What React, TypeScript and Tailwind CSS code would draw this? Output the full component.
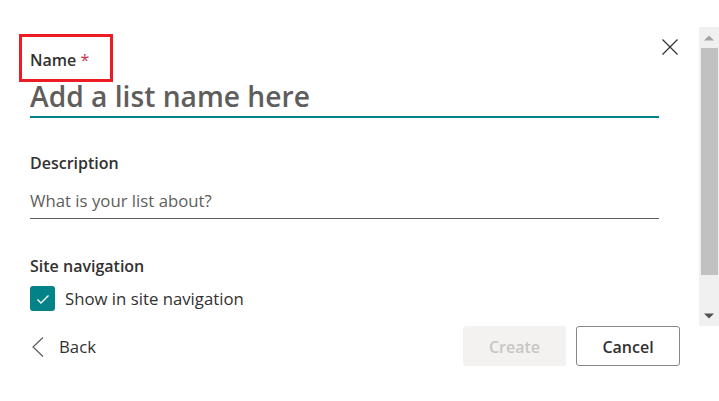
import React, { useState } from 'react';

const font = { fontFamily: '"Open Sans", "Noto Sans", Arial, sans-serif' };

const Scrollbar: React.FC = () => (
  <div className="w-[20px] h-full bg-[#f0f0f0] flex flex-col items-center">
    <div className="h-[21px] w-full flex items-center justify-center">
      <svg width="10" height="6" viewBox="0 0 10 6">
        <path d="M0 5.5 L5 0.5 L10 5.5 Z" fill="#a3a3a3" />
      </svg>
    </div>
    <div className="ml-[1px] w-[17px] h-[227px] bg-[#c1c1c1]" />
    <div className="flex-1" />
    <div className="h-[21px] w-full flex items-center justify-center">
      <svg width="10" height="6" viewBox="0 0 10 6">
        <path d="M0 0.5 L5 5.5 L10 0.5 Z" fill="#505050" />
      </svg>
    </div>
  </div>
);

export default function App() {
  const [name, setName] = useState('');
  const [desc, setDesc] = useState('');
  const [showNav, setShowNav] = useState(true);

  return (
    <div className="relative w-[719px] h-[401px] bg-white text-[#323130] overflow-hidden" style={font}>
      {/* Scrollable body */}
      <div className="flex h-[326px] pt-[27px]">
        <div className="relative flex-1 pl-[30px] pr-[40px] pt-[21px]">
          <label className="block text-[16px] leading-[24px] font-semibold text-[#323130]">
            Name <span className="text-[#c4314b] font-normal">*</span>
          </label>
          <input
            value={name}
            onChange={(e) => setName(e.target.value)}
            placeholder="Add a list name here"
            className="mt-[5px] block w-full h-[41px] border-b-2 border-[#038387] text-[28.2px] font-semibold text-[#323130] placeholder:text-[#605e5c] outline-none bg-transparent"
            style={font}
          />

          <label className="mt-[33px] block text-[16px] leading-[24px] font-semibold">Description</label>
          <input
            value={desc}
            onChange={(e) => setDesc(e.target.value)}
            placeholder="What is your list about?"
            className="mt-[7px] block w-full h-[37px] border-b border-[#605e5c] text-[16.75px] text-[#323130] placeholder:text-[#605e5c] outline-none bg-transparent"
            style={font}
          />

          <label className="mt-[35px] block text-[16px] leading-[24px] font-semibold">Site navigation</label>
          <button
            onClick={() => setShowNav(!showNav)}
            className="mt-[8px] flex items-center gap-[10px] text-[16.75px] leading-[24px] text-[#323130]"
            style={font}
          >
            <span
              className={`w-[25px] h-[25px] rounded-[3px] flex items-center justify-center ${
                showNav ? 'bg-[#038387]' : 'border border-[#323130]'
              }`}
            >
              {showNav && (
                <svg width="16" height="16" viewBox="0 0 16 16">
                  <path d="M2.5 8.5 L6 12 L13.5 4.5" fill="none" stroke="white" strokeWidth="1.4" />
                </svg>
              )}
            </span>
            Show in site navigation
          </button>

          {/* Close */}
          <button className="absolute left-[662px] top-[12px] w-[16px] h-[16px]">
            <svg width="16" height="16" viewBox="0 0 16 16">
              <path d="M0.5 0.5 L15.5 15.5 M15.5 0.5 L0.5 15.5" stroke="#323130" strokeWidth="1.2" />
            </svg>
          </button>
        </div>
        <Scrollbar />
      </div>

      {/* Footer */}
      <div className="flex items-center justify-between h-[40px] pl-[32px] pr-[39px]">
        <button className="flex items-center gap-[15px] pt-[2px] text-[16.75px] leading-[24px] text-[#323130]" style={font}>
          <svg width="12" height="20" viewBox="0 0 12 20">
            <path d="M11 0.5 L1 10 L11 19.5" fill="none" stroke="#605e5c" strokeWidth="1.2" />
          </svg>
          Back
        </button>
        <div className="flex gap-[10px]">
          <button
            disabled
            className="w-[103px] h-[40px] pt-[2px] rounded-[3px] bg-[#f3f2f1] text-[#c8c6c4] text-[16px] font-semibold"
            style={font}
          >
            Create
          </button>
          <button
            className="w-[104px] h-[40px] pt-[2px] rounded-[3px] border border-[#8a8886] bg-white text-[#323130] text-[16px] font-semibold"
            style={font}
          >
            Cancel
          </button>
        </div>
      </div>

      {/* Annotation highlight */}
      <div className="absolute left-[19px] top-[34px] w-[94px] h-[48px] border-[3.5px] border-[#ed1c24] pointer-events-none" />
    </div>
  );
}
